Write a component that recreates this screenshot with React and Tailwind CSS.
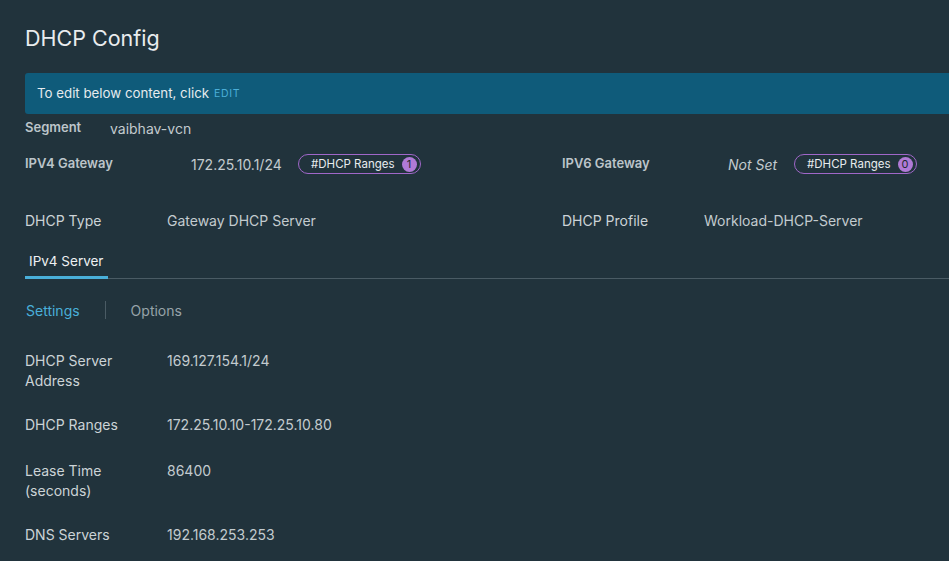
import React from 'react';

const font = { fontFamily: 'Inter, "Noto Sans", sans-serif' };

const RangesPill = ({ count }) => (
    <span className="inline-flex items-center h-[20px] pl-[12px] pr-[3px] rounded-full border border-[#a067c9] text-[11.5px] leading-[18px] text-[#e8ecee] gap-[7px]">
        #DHCP Ranges
        <span className="w-[15px] h-[15px] rounded-full bg-[#b07ad6] text-[#1c2a31] text-[11px] flex items-center justify-center leading-none">
            {count}
        </span>
    </span>
);

const rows = [
    { label: ['DHCP Server', 'Address'], value: '169.127.154.1/24', extra: '' },
    { label: ['DHCP Ranges'], value: '172.25.10.10-172.25.10.80', extra: '' },
    { label: ['Lease Time', '(seconds)'], value: '86400', extra: 'mt-[2px]' },
    { label: ['DNS Servers'], value: '192.168.253.253', extra: '' },
];

export default function App() {
    return (
        <div className="w-[949px] h-[561px] overflow-hidden bg-[#21333c] text-[#c7cfd3]" style={font}>
            <h1 className="pl-[25px] pt-[25px] text-[21.5px] leading-[26px] text-[#e9ecee] font-normal">DHCP Config</h1>

            <div className="ml-[25px] mt-[22px] h-[41px] bg-[#0f5b7a] rounded-l-[3px] flex items-center pl-[12px] text-[13.3px] text-[#e6ebee]">
                To edit below content, click
                <span className="ml-[5px] text-[10.5px] tracking-[0.06em] text-[#4aaed8]">EDIT</span>
            </div>

            <div className="pl-[25px] mt-[4px] flex items-center h-[20px]">
                <span className="w-[85px] text-[13px] font-semibold text-[#bcc5ca]">Segment</span>
                <span className="text-[14px] text-[#c3cbcf]">vaibhav-vcn</span>
            </div>

            <div className="pl-[25px] mt-[16px] flex items-center h-[20px]">
                <div className="w-[537px] flex items-center">
                    <span className="w-[166px] text-[13px] font-semibold text-[#bcc5ca]">IPV4 Gateway</span>
                    <span className="w-[107px] text-[14px] text-[#c3cbcf]">172.25.10.1/24</span>
                    <RangesPill count="1" />
                </div>
                <div className="flex items-center">
                    <span className="w-[166px] text-[13px] font-semibold text-[#bcc5ca]">IPV6 Gateway</span>
                    <span className="w-[66px] text-[14px] italic text-[#c3cbcf]">Not Set</span>
                    <RangesPill count="0" />
                </div>
            </div>

            <div className="pl-[25px] mt-[36px] flex items-center h-[20px] text-[14px]">
                <div className="w-[537px] flex">
                    <span className="w-[142px] text-[#ccd3d7]">DHCP Type</span>
                    <span className="text-[#c3cbcf]">Gateway DHCP Server</span>
                </div>
                <div className="flex">
                    <span className="w-[142px] text-[#ccd3d7]">DHCP Profile</span>
                    <span className="text-[#c3cbcf]">Workload-DHCP-Server</span>
                </div>
            </div>

            <div className="ml-[25px] mt-[21px] border-b border-[#4a5b64] flex">
                <div className="w-[83px] h-[28px] border-b-[3px] border-[#49afd9] -mb-px pl-[4px] text-[13.5px] leading-[20px] text-[#eef1f3]">
                    IPv4 Server
                </div>
            </div>

            <div className="pl-[26px] mt-[21px] flex items-center text-[14px] h-[20px]">
                <span className="text-[#49afd9]">Settings</span>
                <span className="mx-[25px] w-px h-[18px] bg-[#4a5b64]"></span>
                <span className="text-[#97a3a9]">Options</span>
            </div>

            <div className="pl-[25px] mt-[31px] flex flex-col gap-[24px] text-[14px] leading-[20px]">
                {rows.map((r) => (
                    <div key={r.value} className={`flex ${r.extra}`}>
                        <div className="w-[142px] text-[#ccd3d7]">
                            {r.label.map((l) => (
                                <div key={l}>{l}</div>
                            ))}
                        </div>
                        <div className="text-[#c3cbcf]">{r.value}</div>
                    </div>
                ))}
            </div>
        </div>
    );
}
